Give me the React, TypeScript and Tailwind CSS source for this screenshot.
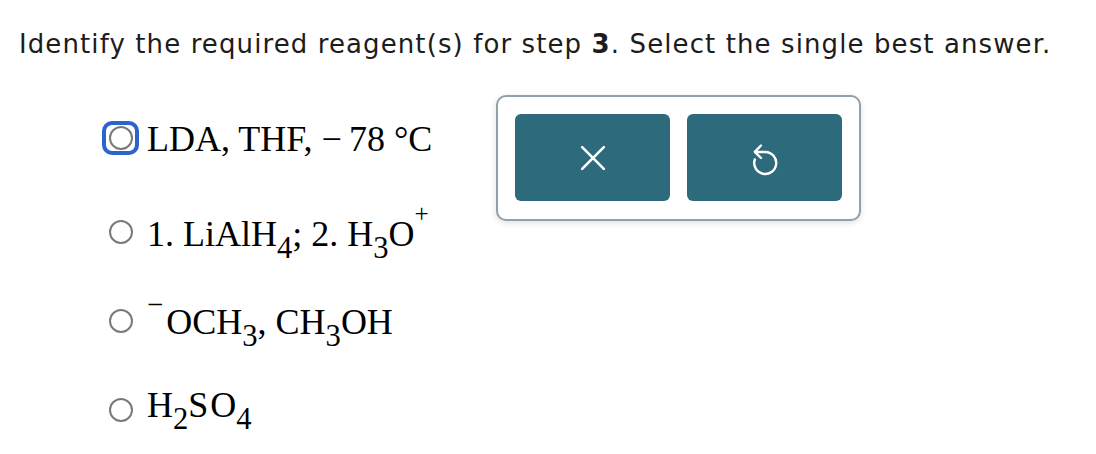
import type { ReactNode } from 'react';

const Radio = ({ selected }: { selected?: boolean }) => {
    if (selected) {
        return (
            <div className="w-[37px] h-[34px] shrink-0 flex items-center justify-center border-[4px] border-[#2b63cf] rounded-[10px] -mt-[3px]">
                <div className="w-[24px] h-[24px] rounded-full border-2 border-[#7a7a7a]" />
            </div>
        );
    }
    return (
        <div className="w-[37px] h-[34px] shrink-0 flex items-center justify-center">
            <div className="w-[24px] h-[24px] rounded-full border-2 border-[#7a7a7a]" />
        </div>
    );
};

const Sub = ({ children }: { children: ReactNode }) => (
    <span className="text-[0.85em] leading-none align-[-0.4em]">{children}</span>
);

const Sup = ({ children, className }: { children: ReactNode; className?: string }) => (
    <span className={'leading-none ' + (className ?? 'text-[0.7em] align-[0.95em]')}>{children}</span>
);

const Option = ({ selected, className, children }: { selected?: boolean; className?: string; children: ReactNode }) => (
    <div className={'flex items-center h-[40px] ' + (className ?? '')}>
        <Radio selected={selected} />
        <div className="ml-[8px] text-[36px] leading-[40px] text-black whitespace-nowrap" style={{ fontFamily: '"Liberation Serif", "Times New Roman", serif' }}>
            {children}
        </div>
    </div>
);

const App = () => {
    return (
        <div className="w-[1096px] h-[454px] bg-white overflow-hidden">
            <h1
                className="pl-[19px] pt-[30px] text-[26px] leading-[28px] tracking-[1.1px] text-[#1c1c1c] font-normal whitespace-nowrap"
                style={{ fontFamily: '"DejaVu Sans", Verdana, sans-serif' }}
            >
                Identify the required reagent(s) for step <span className="font-bold">3</span>. Select the single best answer.
            </h1>

            <div className="flex mt-[37px]">
                <div className="w-[394px] shrink-0 ml-[102px] flex flex-col">
                    <Option selected className="mt-[24px]">LDA, THF, −&thinsp;78 °C</Option>
                    <Option className="mt-[53px]">
                        1. LiAlH<Sub>4</Sub>; 2. H<Sub>3</Sub>O<Sup>+</Sup>
                    </Option>
                    <Option className="mt-[49px]">
                        <Sup className="text-[0.8em] align-[0.7em] mr-[3px]">−</Sup>OCH<Sub>3</Sub>, CH<Sub>3</Sub>OH
                    </Option>
                    <Option className="mt-[49px]">
                        H<Sub>2</Sub>S<span className="ml-[2px]">O</span><Sub>4</Sub>
                    </Option>
                </div>

                <div className="self-start flex gap-[17px] p-[17px] pb-[18px] border-2 border-[#8fa1ab] rounded-[10px] shadow-[0_2px_6px_rgba(0,0,0,0.12)] bg-white">
                    <button className="w-[155px] h-[87px] rounded-[6px] bg-[#2d6a7b] flex items-center justify-center">
                        <svg width="26" height="26" viewBox="0 0 24 24" fill="none" stroke="white" strokeWidth="2.4" strokeLinecap="round">
                            <path d="M2 2 22 22M22 2 2 22" />
                        </svg>
                    </button>
                    <button className="w-[155px] h-[87px] rounded-[6px] bg-[#2d6a7b] flex items-center justify-center">
                        <svg width="30" height="36" viewBox="0 0 30 36" fill="none" stroke="white" strokeWidth="2.4" strokeLinecap="round" strokeLinejoin="round">
                            <path d="M4.8 19.5A11 11 0 1 0 15.5 12H5" />
                            <path d="M11 5.5 4.8 11.8 11 18" />
                        </svg>
                    </button>
                </div>
            </div>
        </div>
    );
};

export default App;
